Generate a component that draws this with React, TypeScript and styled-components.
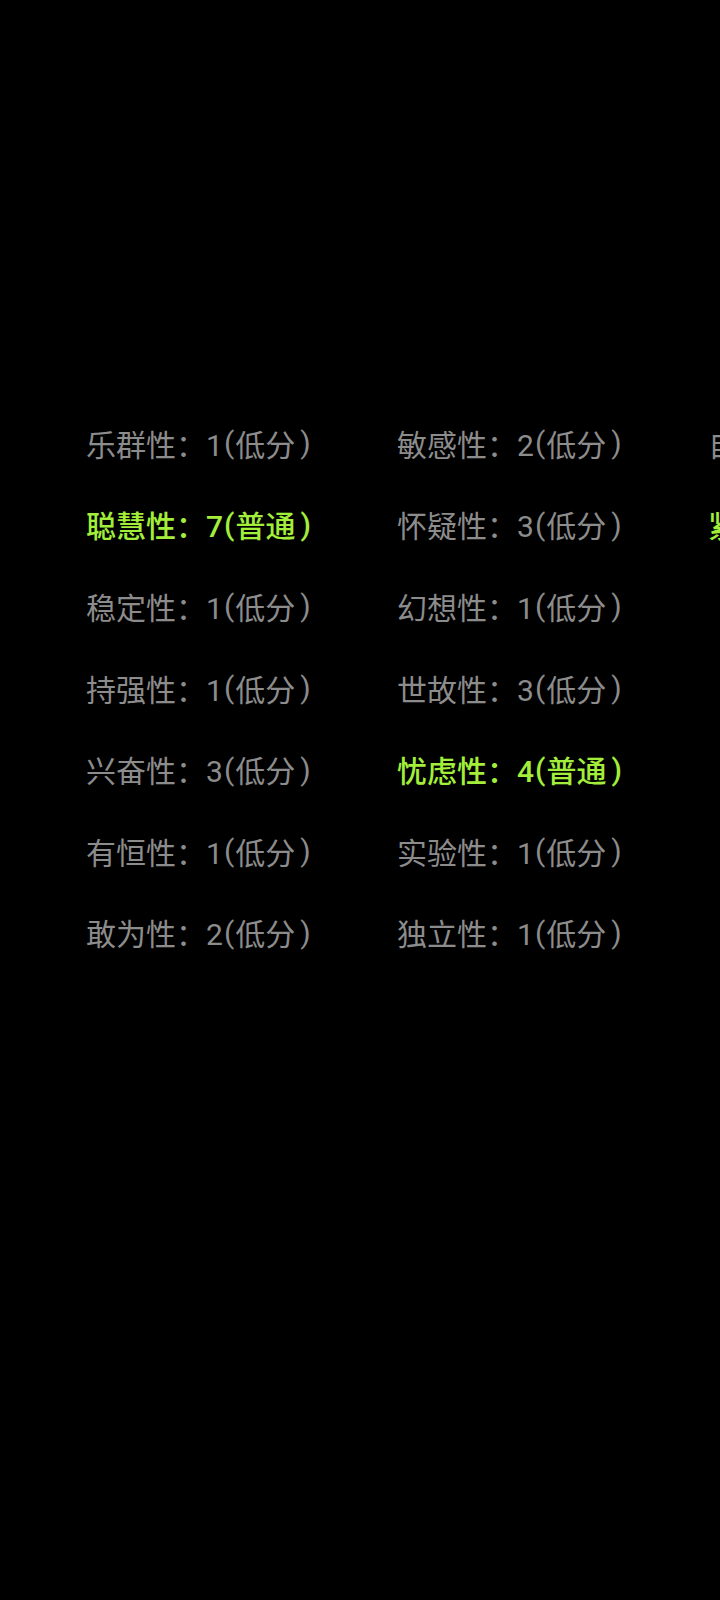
import React from 'react'
import styled, { createGlobalStyle } from 'styled-components'

const GlobalStyle = createGlobalStyle`
  html, body {
    margin: 0;
    padding: 0;
    background: #000;
  }
`

const Page = styled.div`
  width: 720px;
  height: 1600px;
  background: #000;
  overflow: hidden;
  box-sizing: border-box;
  padding-top: 402px;
  padding-left: 86px;
`

const Grid = styled.div`
  display: grid;
  grid-auto-flow: column;
  grid-template-rows: repeat(7, 81.6px);
  grid-auto-columns: 311px;
  width: max-content;
`

const Item = styled.div<{ $normal?: boolean }>`
  display: flex;
  align-items: center;
  white-space: nowrap;
  font-family: Roboto, "Noto Sans CJK SC", sans-serif;
  font-size: 30px;
  font-weight: ${({ $normal }) => ($normal ? 500 : 400)};
  color: ${({ $normal }) => ($normal ? '#a3ee3a' : '#8c8c8c')};
`

const Paren = styled.span<{ $close?: boolean }>`
  padding: ${({ $close }) => ($close ? '0 0 0 5px' : '0 1px')};
`

type Factor = { name: string; score: number; level: string }

const factors: Factor[] = [
  { name: '乐群性', score: 1, level: '低分' },
  { name: '聪慧性', score: 7, level: '普通' },
  { name: '稳定性', score: 1, level: '低分' },
  { name: '持强性', score: 1, level: '低分' },
  { name: '兴奋性', score: 3, level: '低分' },
  { name: '有恒性', score: 1, level: '低分' },
  { name: '敢为性', score: 2, level: '低分' },
  { name: '敏感性', score: 2, level: '低分' },
  { name: '怀疑性', score: 3, level: '低分' },
  { name: '幻想性', score: 1, level: '低分' },
  { name: '世故性', score: 3, level: '低分' },
  { name: '忧虑性', score: 4, level: '普通' },
  { name: '实验性', score: 1, level: '低分' },
  { name: '独立性', score: 1, level: '低分' },
  { name: '自律性', score: 2, level: '低分' },
  { name: '紧张性', score: 5, level: '普通' },
]

export default function App() {
  return (
    <>
      <GlobalStyle />
      <Page>
        <Grid>
          {factors.map((f) => (
            <Item key={f.name} $normal={f.level === '普通'}>
              {f.name}：{f.score}<Paren>(</Paren>{f.level}<Paren $close>)</Paren>
            </Item>
          ))}
        </Grid>
      </Page>
    </>
  )
}
